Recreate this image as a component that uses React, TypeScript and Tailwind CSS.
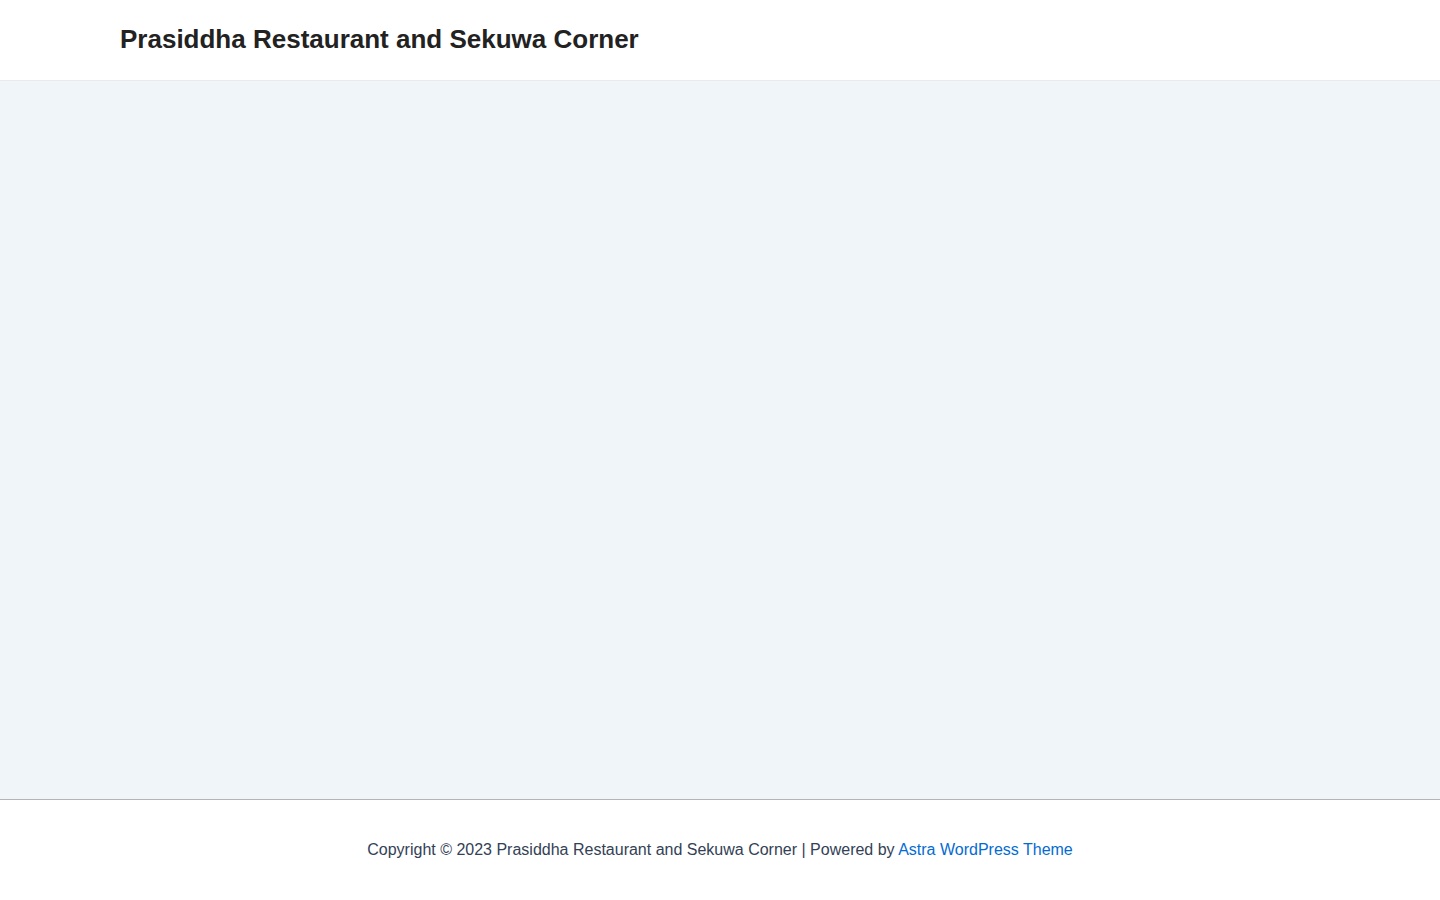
export default function App() {
  return (
    <div className="flex h-[900px] flex-col bg-white font-['Liberation_Sans',Arial,sans-serif]">
      {/* Site header */}
      <header className="flex h-[81px] shrink-0 items-center border-b border-[#eaeaea] bg-white px-[120px]">
        <a href="#" className="-mt-[3px] text-[26px] font-bold leading-none text-[#222222]">
          Prasiddha Restaurant and Sekuwa Corner
        </a>
      </header>

      {/* Empty content area */}
      <main className="flex-1 bg-[#f0f5fa]" />

      {/* Footer */}
      <footer className="flex h-[101px] shrink-0 items-center justify-center border-t border-[#b4b4b4] bg-white">
        <p className="text-[16px] leading-none text-[#334155]">
          Copyright © 2023 Prasiddha Restaurant and Sekuwa Corner | Powered by{' '}
          <a href="#" className="text-[#046bd2]">
            Astra WordPress Theme
          </a>
        </p>
      </footer>
    </div>
  );
}
